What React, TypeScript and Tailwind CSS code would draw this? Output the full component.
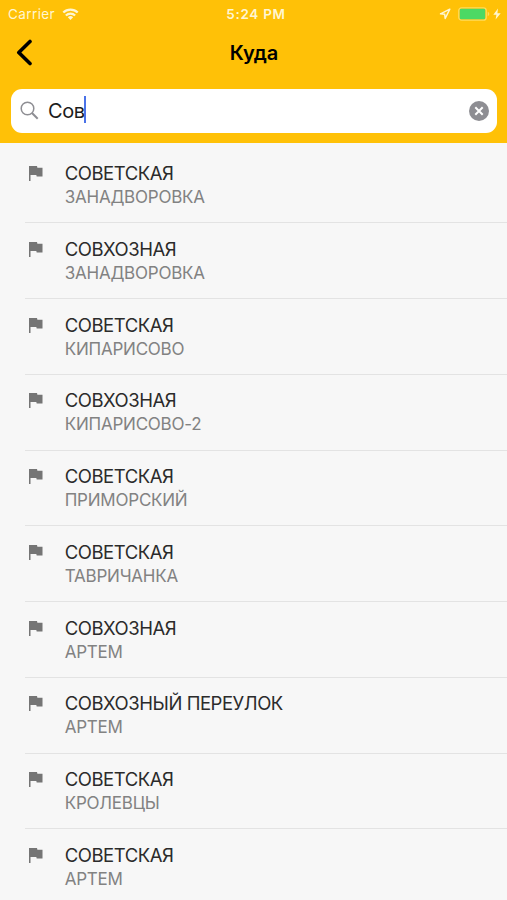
import React, { useState } from 'react';

interface Place {
  id: number;
  street: string;
  city: string;
}

const places: Place[] = [
  { id: 1, street: 'СОВЕТСКАЯ', city: 'ЗАНАДВОРОВКА' },
  { id: 2, street: 'СОВХОЗНАЯ', city: 'ЗАНАДВОРОВКА' },
  { id: 3, street: 'СОВЕТСКАЯ', city: 'КИПАРИСОВО' },
  { id: 4, street: 'СОВХОЗНАЯ', city: 'КИПАРИСОВО-2' },
  { id: 5, street: 'СОВЕТСКАЯ', city: 'ПРИМОРСКИЙ' },
  { id: 6, street: 'СОВЕТСКАЯ', city: 'ТАВРИЧАНКА' },
  { id: 7, street: 'СОВХОЗНАЯ', city: 'АРТЕМ' },
  { id: 8, street: 'СОВХОЗНЫЙ ПЕРЕУЛОК', city: 'АРТЕМ' },
  { id: 9, street: 'СОВЕТСКАЯ', city: 'КРОЛЕВЦЫ' },
  { id: 10, street: 'СОВЕТСКАЯ', city: 'АРТЕМ' },
];

function StatusBar() {
  return (
    <div className="grid h-7 grid-cols-3 items-center pl-2 pr-[6px] text-[13.5px] leading-none text-[#fff6d2]">
      <div className="flex items-center gap-[7px]">
        <span className="pt-px tracking-[0.4px]">Carrier</span>
        <svg width="17" height="12" viewBox="0 0 18 13" fill="none" stroke="currentColor" strokeWidth="2.4">
          <path d="M1.2 4.9a11 11 0 0 1 15.6 0" />
          <path d="M4 8.1a7 7 0 0 1 10 0" />
          <path d="M9 13 6.1 10.1a4.1 4.1 0 0 1 5.8 0z" fill="currentColor" stroke="none" />
        </svg>
      </div>
      <span className="whitespace-nowrap pl-[3px] pt-px text-center font-semibold tracking-[0.7px]">5:24 PM</span>
      <div className="flex items-center justify-end">
        <svg width="12" height="12" viewBox="0 0 12 12" fill="none" stroke="currentColor" strokeWidth="1.5" strokeLinejoin="round">
          <path d="M10.8 1.2 1.5 5.8l4.2.5.5 4.2z" />
        </svg>
        <svg className="ml-[7px]" width="32" height="14" viewBox="0 0 32 14">
          <rect x="0.8" y="0.8" width="27.4" height="12.4" rx="2.8" fill="none" stroke="#ffdc5e" strokeWidth="1.3" />
          <rect x="1.8" y="1.8" width="25.4" height="10.4" rx="1.2" fill="#4cd964" />
          <path d="M29.7 4.8v4.4c1-.4 1.6-1.2 1.6-2.2s-.6-1.8-1.6-2.2z" fill="#ffdc5e" />
        </svg>
        <svg className="ml-[3px]" width="8" height="12" viewBox="0 0 8 12" fill="currentColor">
          <path d="M5 .5.3 6.8h3.1l-.8 4.7 5.1-6.3H4.4z" />
        </svg>
      </div>
    </div>
  );
}

function FlagIcon() {
  return (
    <svg className="mt-[18.5px] shrink-0" width="14" height="15" viewBox="0 0 14 15" fill="#757575">
      <path d="M0 0h8l.4 1.7h5.1v8.9H7.7l-.4-1.7H1.5V15H0z" />
    </svg>
  );
}

function PlaceRow({ place }: { place: Place }) {
  return (
    <li className="ml-[25px] flex h-[75.75px] border-b border-[#e3e3e3] pl-[4px]">
      <FlagIcon />
      <div className="ml-[21.7px] pt-[13.5px]">
        <div className="text-[18.5px] leading-6 tracking-[-0.46px] text-[#2b2b2b]">{place.street}</div>
        <div className="text-[17px] leading-[25px] tracking-[-0.22px] text-[#828282]">{place.city}</div>
      </div>
    </li>
  );
}

export default function App() {
  const [query, setQuery] = useState('Сов');

  return (
    <div className="h-[900px] overflow-hidden bg-[#f7f7f7] font-['Inter','Liberation_Sans',sans-serif]">
      <header className="h-[142.5px] bg-[#ffc107]">
        <StatusBar />
        <div className="grid h-[61px] grid-cols-[60px_1fr_60px] items-start">
          <button className="pl-4 pt-[11px]" aria-label="Назад">
            <svg width="17" height="27" viewBox="0 0 17 27" fill="none" stroke="#000" strokeWidth="3.6" strokeLinecap="round" strokeLinejoin="round">
              <path d="M14 2.5 2.8 13.5 14 24.5" />
            </svg>
          </button>
          <h1 className="pl-px pt-[11px] text-center text-[20px] font-semibold leading-7 text-black">Куда</h1>
        </div>
        <div className="ml-[11px] mr-[10px] flex h-[43.5px] items-center rounded-[11px] bg-white pl-[9px] pr-2">
          <svg width="19" height="19" viewBox="0 0 19 19" fill="none" stroke="#8e8e93" strokeWidth="1.5">
            <circle cx="7.5" cy="7.5" r="6.3" />
            <path d="m12 12 5.7 5.7" strokeWidth="2" />
          </svg>
          <span className="ml-[9px] text-[20px] leading-none tracking-[-0.4px] text-[#1c1c1c]">{query}</span>
          <span className="-ml-[0.5px] mb-[2px] h-[27px] w-[2px] bg-[#4a72e8]" />
          <button className="ml-auto" aria-label="Очистить" onClick={() => setQuery('')}>
            <svg width="20" height="20" viewBox="0 0 20 20">
              <circle cx="10" cy="10" r="10" fill="#8e8e93" />
              <path d="m6.3 6.3 7.4 7.4M13.7 6.3l-7.4 7.4" stroke="#fff" strokeWidth="2" />
            </svg>
          </button>
        </div>
      </header>
      <ul className="pt-[5px]">
        {places.map((place) => (
          <PlaceRow key={place.id} place={place} />
        ))}
      </ul>
    </div>
  );
}
